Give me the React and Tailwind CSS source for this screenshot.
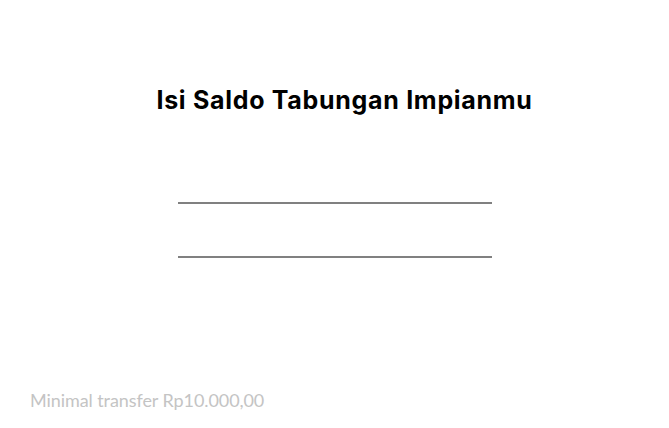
export default function App() {
  return (
    <div className="h-[428px] w-full bg-white flex flex-col" style={{ fontFamily: "Inter, 'Noto Sans', sans-serif" }}>
      <h1 className="mt-[84px] pl-[20px] text-center text-[25px] font-bold text-black leading-[32px] tracking-[0.7px]">
        Isi Saldo Tabungan Impianmu
      </h1>
      <div className="mt-[86px] flex flex-col items-center">
        <div className="w-[314px] h-[2px] bg-[#808080]" />
        <div className="mt-[52px] w-[314px] h-[2px] bg-[#808080]" />
      </div>
      <p className="mt-[131px] pl-[30px] text-[18px] leading-[22px] text-[#c4c4c4] tracking-[-0.08px]" style={{ fontFamily: "Lato, sans-serif" }}>
        Minimal transfer Rp10.000,00
      </p>
    </div>
  );
}
